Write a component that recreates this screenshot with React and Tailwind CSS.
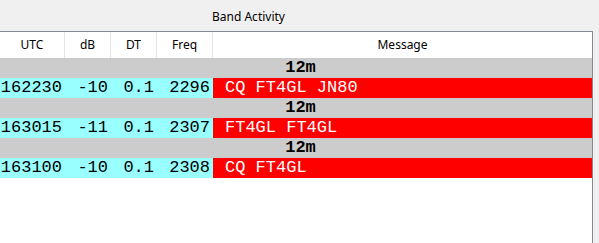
const rows = [
  { band: '12m', utc: '162230', db: '-10', dt: '0.1', freq: '2296', msg: 'CQ FT4GL JN80' },
  { band: '12m', utc: '163015', db: '-11', dt: '0.1', freq: '2307', msg: 'FT4GL FT4GL' },
  { band: '12m', utc: '163100', db: '-10', dt: '0.1', freq: '2308', msg: 'CQ FT4GL' },
]

const cols = [
  { key: 'utc', label: 'UTC', w: 'w-[65px]' },
  { key: 'db', label: 'dB', w: 'w-[46px]' },
  { key: 'dt', label: 'DT', w: 'w-[46px]' },
  { key: 'freq', label: 'Freq', w: 'w-[56px]' },
]

const ui = { fontFamily: '"Noto Sans", "Open Sans", sans-serif' }
const mono = { fontFamily: '"Liberation Mono", "Courier New", monospace' }

export default function App() {
  return (
    <div className="w-[599px] h-[243px] bg-[#f0f0f0] flex flex-col overflow-hidden text-black" style={ui}>
      <div className="h-[31px] shrink-0 flex items-center pl-[212px] pt-[3px] text-[12px]">Band Activity</div>

      <div className="flex-1 flex">
        <div className="w-[593px] bg-white border-t border-r border-[#848a94] flex flex-col">
          {/* header */}
          <div className="h-[26px] shrink-0 flex text-[12px]">
            {cols.map(c => (
              <div key={c.key} className={`${c.w} shrink-0 flex items-center justify-center border-r border-[#e5e5e5]`}>
                {c.label}
              </div>
            ))}
            <div className="flex-1 flex items-center justify-center">Message</div>
          </div>

          {rows.map((r, i) => (
            <div key={i} className="text-[17px] leading-[20px]" style={mono}>
              <div className="h-[20px] bg-[#cccccc] flex items-start justify-center pl-[9px] font-bold whitespace-pre">
                {r.band}
              </div>
              <div className="h-[20px] flex items-start whitespace-pre">
                {cols.map(c => (
                  <div key={c.key} className={`${c.w} shrink-0 bg-[#99ffff] text-right pr-[3px]`}>
                    {r[c.key]}
                  </div>
                ))}
                <div className="flex-1 bg-[#ff0000] text-white pl-[12px]">{r.msg}</div>
              </div>
            </div>
          ))}
        </div>
      </div>
    </div>
  )
}
